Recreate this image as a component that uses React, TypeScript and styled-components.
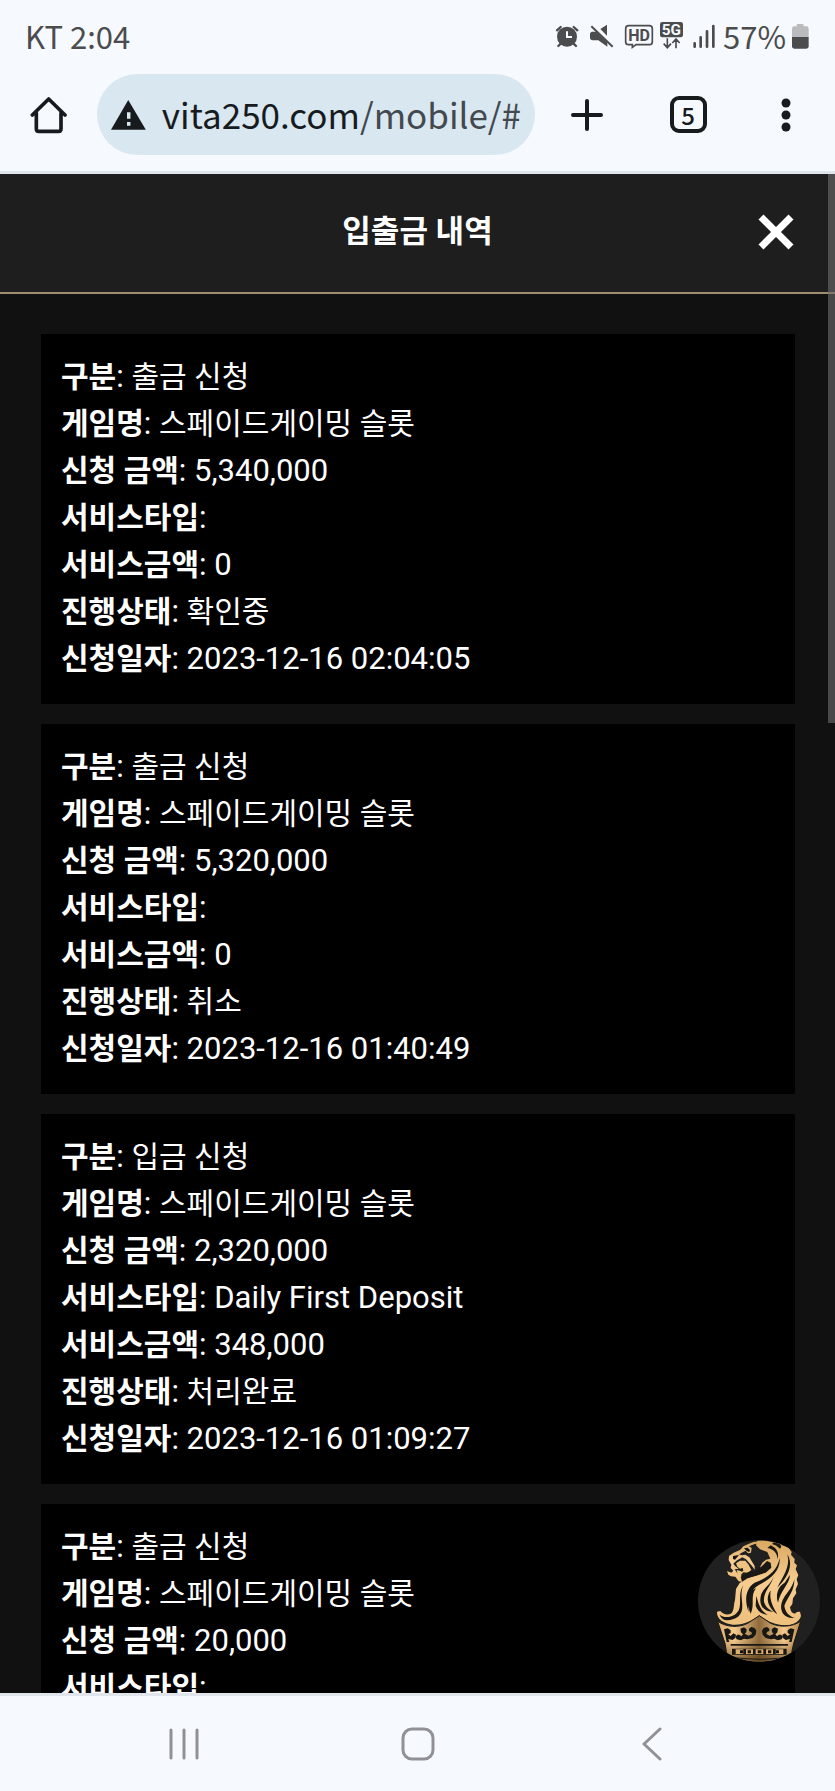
import React from 'react';
import styled, { createGlobalStyle } from 'styled-components';

const GlobalStyle = createGlobalStyle`
  * { box-sizing: border-box; }
  body { margin: 0; background: #111; }
  button { margin: 0; padding: 0; border: 0; background: none; color: inherit; font: inherit; cursor: pointer; }
`;

const systemFont = '"Noto Sans CJK KR", "Noto Sans", sans-serif';
const pageFont = 'Roboto, "Noto Sans CJK KR", sans-serif';

const Screen = styled.div`
  display: flex;
  flex-direction: column;
  height: 100vh;
  overflow: hidden;
  font-family: ${systemFont};
`;

const StatusBar = styled.div`
  display: flex;
  flex: none;
  align-items: center;
  justify-content: space-between;
  height: 74px;
  padding: 0 25px 3px;
  background: #f6f9fe;
  color: #4b4c4e;
  font-size: 31px;
  line-height: 44px;
`;

const StatusIcons = styled.div`
  display: flex;
  align-items: center;
  gap: 5px;
`;

const StatusSvg = styled.svg`
  display: block;
  height: 28px;
`;

const Toolbar = styled.div`
  display: flex;
  flex: none;
  align-items: center;
  padding-bottom: 16px;
  border-bottom: 3px solid #dfe5ea;
  background: #f6f9fe;
  color: #171b1e;
`;

const ToolButton = styled.button<{ $width: number }>`
  display: flex;
  flex: none;
  align-items: center;
  justify-content: center;
  width: ${(p) => p.$width}px;
  height: 81px;
`;

const AddressBar = styled.button`
  display: flex;
  flex: 1;
  align-items: center;
  gap: 16px;
  min-width: 0;
  height: 81px;
  padding: 0 14px;
  overflow: hidden;
  border-radius: 41px;
  background: #d9e7f0;
  font-size: 35px;
  line-height: 50px;
  white-space: nowrap;
`;

const Url = styled.span`
  padding-bottom: 2px;
`;

const UrlPath = styled.span`
  color: #43494e;
`;

const TabCount = styled.span`
  display: flex;
  align-items: center;
  justify-content: center;
  width: 37px;
  height: 37px;
  border: 4px solid #171b1e;
  border-radius: 9px;
  font-size: 24px;
  font-weight: 500;
  line-height: 28px;
`;

const Page = styled.div`
  position: relative;
  flex: 1;
  min-height: 0;
  background: #111;
  color: #fff;
  font-family: ${pageFont};
`;

const Scroller = styled.div`
  height: 100%;
  overflow-y: auto;
  scrollbar-width: none;
`;

const ScrollThumb = styled.div`
  position: absolute;
  top: 0;
  right: 0;
  width: 7px;
  height: 549px;
  background: rgba(110, 110, 110, 0.6);
`;

const PageHeader = styled.header`
  display: grid;
  grid-template-columns: 1fr auto 1fr;
  align-items: center;
  height: 120px;
  padding: 0 41px 2px;
  border-bottom: 2px solid #a08d70;
  background: #1e1e1e;
`;

const PageTitle = styled.h1`
  grid-column: 2;
  margin: 0;
  font-size: 31px;
  font-weight: 700;
  line-height: 44px;
`;

const CloseButton = styled.button`
  display: flex;
  justify-self: end;
`;

const HistoryList = styled.ul`
  display: flex;
  flex-direction: column;
  gap: 20px;
  margin: 0;
  padding: 40px 40px 40px 41px;
  list-style: none;
`;

const HistoryCard = styled.li`
  padding: 19px 20px 22px;
  background: #000;
`;

const Row = styled.div`
  height: 47px;
  font-size: 31px;
  line-height: 47px;
  white-space: nowrap;
`;

const Label = styled.strong`
  font-size: 30px;
  font-weight: 700;
`;

const Value = styled.span<{ $hangul: boolean }>`
  font-size: ${(p) => (p.$hangul ? 30 : 31)}px;
`;

const CasinoButton = styled.button`
  position: absolute;
  right: 15px;
  bottom: 31px;
  width: 122px;
  height: 122px;
`;

const NavBar = styled.nav`
  display: grid;
  flex: none;
  grid-template-columns: repeat(3, 1fr);
  height: 98px;
  padding: 0 66px 0 67px;
  border-top: 3px solid #dfe5ea;
  background: #f6f9fe;
`;

const NavButton = styled.button`
  display: flex;
  align-items: center;
  justify-content: center;
`;

type Entry = [string, string];

const labels = ['구분', '게임명', '신청 금액', '서비스타입', '서비스금액', '진행상태', '신청일자'];

const record = (...values: string[]): Entry[] => values.map((v, i) => [labels[i], v]);

const history: Entry[][] = [
  record('출금 신청', '스페이드게이밍 슬롯', '5,340,000', '', '0', '확인중', '2023-12-16 02:04:05'),
  record('출금 신청', '스페이드게이밍 슬롯', '5,320,000', '', '0', '취소', '2023-12-16 01:40:49'),
  record('입금 신청', '스페이드게이밍 슬롯', '2,320,000', 'Daily First Deposit', '348,000', '처리완료', '2023-12-16 01:09:27'),
  record('출금 신청', '스페이드게이밍 슬롯', '20,000', ''),
];

const AlarmIcon = () => (
  <StatusSvg width="29" viewBox="414 66 87 84" aria-label="알람">
    <g stroke="#4b4c4e" strokeWidth="7" strokeLinecap="round" fill="none">
      <path d="M420 91 431 81M481 91 470 81M432 130 424 138M469 130 477 138" />
    </g>
    <circle cx="450" cy="110" r="30" fill="#4b4c4e" />
    <path d="M450 94V111H465" fill="none" stroke="#f6f9fe" strokeWidth="6" />
  </StatusSvg>
);

const MuteIcon = () => (
  <StatusSvg width="30" viewBox="519 66 90 84" aria-label="무음">
    <path d="M522 103Q522 95 530 95H541L574 128V140L547 121H530Q522 121 522 112Z M553 87 573 74V107Z" fill="#4b4c4e" />
    <path d="M526 79 590 140" stroke="#4b4c4e" strokeWidth="6" fill="none" />
  </StatusSvg>
);

const HdIcon = () => (
  <StatusSvg width="30" viewBox="624 66 90 84" aria-label="HD">
    <path d="M638 77H700Q709 77 709 86V125Q709 134 700 134H660L649 142V134H638Q629 134 629 125V86Q629 77 638 77Z" fill="none" stroke="#4b4c4e" strokeWidth="5" />
    <text x="669" y="123" textAnchor="middle" fontSize="48" fontWeight="700" fontFamily="Roboto, sans-serif" fill="#4b4c4e">HD</text>
  </StatusSvg>
);

const FiveGIcon = () => (
  <StatusSvg width="26" viewBox="732 66 78 84" aria-label="5G">
    <rect x="735" y="66" width="69" height="46" rx="7" fill="#4b4c4e" />
    <text x="769" y="106" textAnchor="middle" fontSize="46" fontWeight="700" fontFamily="Roboto, sans-serif" fill="#f6f9fe">5G</text>
    <path d="M757 115V142M746 131 757 143 768 131M783 145V118M772 129 783 117 794 129" fill="none" stroke="#4b4c4e" strokeWidth="5" />
  </StatusSvg>
);

const SignalIcon = () => (
  <StatusSvg width="28" viewBox="825 66 84 84" aria-label="신호">
    <path d="M839 130V140M857 112V140M876 94V140M895 78V140" stroke="#4b4c4e" strokeWidth="8" strokeLinecap="round" />
  </StatusSvg>
);

const BatteryIcon = () => (
  <StatusSvg width="19" viewBox="1128 66 57 84" aria-label="배터리">
    <path d="M1131 112V86Q1131 79 1138 79H1145V76Q1145 72 1149 72H1162Q1166 72 1166 76V79H1174Q1181 79 1181 86V112Z" fill="#b9bbbf" />
    <path d="M1131 111H1181V139Q1181 146 1174 146H1138Q1131 146 1131 139Z" fill="#4b4c4e" />
  </StatusSvg>
);

const LionCrest = () => (
  <svg width="122" height="122" viewBox="54 60 366 366" aria-hidden="true">
    <defs>
      <linearGradient id="mane" x1="0" y1="0" x2="0" y2="1">
        <stop offset="0" stopColor="#d9a860" />
        <stop offset="0.5" stopColor="#f6cc90" />
        <stop offset="1" stopColor="#eec07c" />
      </linearGradient>
      <linearGradient id="crown" x1="0" y1="0" x2="1" y2="0">
        <stop offset="0" stopColor="#d9ac70" />
        <stop offset="0.2" stopColor="#f5ca8d" />
        <stop offset="0.5" stopColor="#8f6b3c" />
        <stop offset="0.8" stopColor="#f5ca8d" />
        <stop offset="1" stopColor="#b9894d" />
      </linearGradient>
      <linearGradient id="crownShade" x1="0" y1="0" x2="0" y2="1">
        <stop offset="0.5" stopColor="#3a2408" stopOpacity="0" />
        <stop offset="1" stopColor="#3a2408" stopOpacity="0.6" />
      </linearGradient>
      <clipPath id="disc"><circle cx="237" cy="243" r="182" /></clipPath>
    </defs>
    <circle cx="237" cy="243" r="183" fill="#202020" />
    <g clipPath="url(#disc)">
      {/* mane and chest */}
      <path
        fill="url(#mane)"
        d="M232 62 262 60 300 60 306 76 322 78 335 96 333 104 344 117 343 128 351 136 347 148 355 165 350 178 354 192 347 208 349 220 339 235 337 252 330 262C333 280 343 286 350 276L360 275 363 288C358 304 344 313 324 315 288 318 260 303 238 286 218 302 190 316 158 314 130 311 109 296 111 275L121 273C128 281 139 286 151 282 164 275 160 255 165 240L168 207 179 189 210 172 236 164 248 153 240 142 247 128 258 119 271 116 262 96 240 88 228 76Z"
      />
      {/* face profile */}
      <path
        fill="url(#mane)"
        d="M240 64 220 66 205 72 190 79 181 89 160 99 147 108 146 120 154 134 152 144 160 152 154 158 141 153 145 164 153 169 166 170 176 184 188 186 206 176 196 168 186 170 180 160 172 160 164 148 176 146 166 139 160 131 169 122 187 112 198 118 216 138 224 149 224 138 208 112 196 104 186 106 177 103 188 97 197 92 204 100 213 98 215 84 207 79 224 72 242 70Z"
      />
      <path fill="#151515" d="M159 108 177 105 165 119 159 117ZM192 85 203 83 210 90 208 96 200 93Z" />
      <path fill="#f0c27f" d="M168 130 180 122 196 122 206 134 214 150 203 158 190 157 182 166 172 160 170 150 184 154 188 144 180 146 172 140Z" />
      <path fill="#1a1815" d="M184 148 188 144 190 152 184 156Z" />
      {/* shadow of the cheek and locks */}
      <g fill="#1a1815">
        <path d="M182 170 205 156 228 152 246 138 261 123 272 128 274 143 257 158 226 168 204 174 186 185Z" />
        <path d="M262 84C282 87 293 101 292 118 299 101 291 84 272 76Z" />
        <path d="M296 64 304 80 300 86C292 78 284 74 276 72L282 66Z" />
        <path d="M299 115C302 149 275 174 246 190 213 204 200 236 206 276 194 246 194 207 224 188 262 174 290 155 299 115Z" />
        <path d="M322 103C333 141 306 173 292 203L309 184C331 156 337 127 322 103Z" />
        <path d="M283 164C274 198 249 214 252 245 257 262 269 270 280 275 245 276 235 249 244 221 255 200 276 190 283 164Z" />
        <path d="M330 164C329 193 301 211 294 248 285 222 296 198 314 188Z" />
        <path d="M343 178C344 213 323 231 313 257 315 276 328 289 344 294 312 297 298 273 305 248 314 221 337 208 343 178Z" />
        <path d="M228 205C209 229 226 255 212 281 204 263 195 232 211 213Z" />
        <path d="M190 196C169 226 194 267 164 284 147 295 129 292 119 284 128 308 154 303 174 290 202 268 174 231 190 196Z" />
        <path d="M229 227C235 250 240 270 263 285 243 283 231 270 227 257Z" />
        <path d="M272 211C268 237 276 256 292 283 263 263 255 235 272 211Z" />
      </g>
      {/* crown */}
      <path fill="url(#crown)" stroke="#1a1815" strokeWidth="3" d="M113 304C139 322 176 324 203 310L238 287 272 310C301 323 336 321 362 304L341 370 332 411 290 432H180L142 411 135 370Z" />
      <path fill="url(#crownShade)" d="M113 304C139 322 176 324 203 310L238 287 272 310C301 323 336 321 362 304L341 370 332 411 290 432H180L142 411 135 370Z" />
      <g fill="#191713">
        <path d="M132 328 143 325 152 331 152 339 145 343 152 348 160 340 168 344 166 354 158 360 145 357 148 366 140 366Z" />
        <path d="M181 326 192 322 200 328 199 337 194 341 206 347 216 342 214 336 207 333 207 326 214 321 224 324 229 332 227 344 218 354 202 358 192 356 182 361 170 358 166 350 172 344 178 344 184 349 189 343 183 337Z" />
        <path d="M294 326 283 322 275 328 276 337 281 341 269 347 259 342 261 336 268 333 268 326 261 321 251 324 246 332 248 344 257 354 273 358 283 356 293 361 305 358 309 350 303 344 297 344 291 349 286 343 292 337Z" />
        <path d="M343 328 332 325 323 331 323 339 330 343 323 348 315 340 307 344 309 354 317 360 330 357 327 366 335 366Z" />
        <path d="M152 372H324V377H152ZM156 386H320V404H156Z" />
        <path d="M163 412Q238 420 312 412V415Q238 423 163 415Z" />
      </g>
      <path fill="#dcae6c" d="M167 388H190V402H167ZM198 388H219V402H198ZM227 388H250V402H227ZM258 388H279V402H258ZM287 388H310V402H287Z" />
      <path fill="#18130d" d="M180 391H190V400H180ZM203 391H213V400H203ZM233 391H244V400H233ZM264 391H274V400H264ZM287 391H297V400H287Z" />
    </g>
  </svg>
);

export default function App() {
  return (
    <Screen>
      <GlobalStyle />
      <StatusBar>
        <span>KT 2:04</span>
        <StatusIcons>
          <AlarmIcon />
          <MuteIcon />
          <HdIcon />
          <FiveGIcon />
          <SignalIcon />
          <span>57%</span>
          <BatteryIcon />
        </StatusIcons>
      </StatusBar>

      <Toolbar>
        <ToolButton $width={97} aria-label="홈">
          <svg width="38" height="38" viewBox="90 288 114 114" fill="none" stroke="#171b1e" strokeWidth="11" strokeLinejoin="round" strokeLinecap="round">
            <path d="M97 345 146 297 195 345M109 338V386Q109 394 117 394H175Q183 394 183 386V338" />
          </svg>
        </ToolButton>
        <AddressBar aria-label="주소창">
          <svg width="37" height="32" viewBox="333 290 111 96">
            <path d="M388 290 444 385H333Z" fill="#171b1e" />
            <path d="M384 329H395V350H384ZM384 360H395V372H384Z" fill="#d9e7f0" />
          </svg>
          <Url>
            vita250.com<UrlPath>/mobile/#</UrlPath>
          </Url>
        </AddressBar>
        <ToolButton $width={104} aria-label="새 탭">
          <svg width="34" height="34" viewBox="0 0 34 34" stroke="#171b1e" strokeWidth="4" strokeLinecap="round">
            <path d="M17 3V31M3 17H31" />
          </svg>
        </ToolButton>
        <ToolButton $width={98} aria-label="탭 목록">
          <TabCount>5</TabCount>
        </ToolButton>
        <ToolButton $width={98} aria-label="메뉴">
          <svg width="10" height="34" viewBox="0 0 10 34" fill="#171b1e">
            <circle cx="5" cy="5" r="4.500" />
            <circle cx="5" cy="17" r="4.500" />
            <circle cx="5" cy="29" r="4.500" />
          </svg>
        </ToolButton>
      </Toolbar>

      <Page>
        <Scroller>
          <PageHeader>
            <PageTitle>입출금 내역</PageTitle>
            <CloseButton aria-label="닫기">
              <svg width="36" height="38" viewBox="0 0 36 38" stroke="#fff" strokeWidth="7">
                <path d="M3 4 33 34M33 4 3 34" />
              </svg>
            </CloseButton>
          </PageHeader>
          <HistoryList>
            {history.map((entries, i) => (
              <HistoryCard key={i}>
                {entries.map(([label, value]) => (
                  <Row key={label}>
                    <Label>{label}</Label>: <Value $hangul={/[가-힣]/.test(value)}>{value}</Value>
                  </Row>
                ))}
              </HistoryCard>
            ))}
          </HistoryList>
        </Scroller>
        <ScrollThumb />
        <CasinoButton aria-label="카지노">
          <LionCrest />
        </CasinoButton>
      </Page>

      <NavBar>
        <NavButton aria-label="최근 앱">
          <svg width="32" height="34" viewBox="0 0 32 34" stroke="#919195" strokeWidth="3" strokeLinecap="round">
            <path d="M3 3V31M16 3V31M29 3V31" />
          </svg>
        </NavButton>
        <NavButton aria-label="홈 화면">
          <svg width="34" height="34" viewBox="0 0 34 34" fill="none" stroke="#919195" strokeWidth="3">
            <rect x="2" y="2" width="30" height="30" rx="9" />
          </svg>
        </NavButton>
        <NavButton aria-label="뒤로">
          <svg width="22" height="34" viewBox="0 0 22 34" fill="none" stroke="#919195" strokeWidth="3" strokeLinecap="round" strokeLinejoin="round">
            <path d="M19 2 3 17 19 32" />
          </svg>
        </NavButton>
      </NavBar>
    </Screen>
  );
}
